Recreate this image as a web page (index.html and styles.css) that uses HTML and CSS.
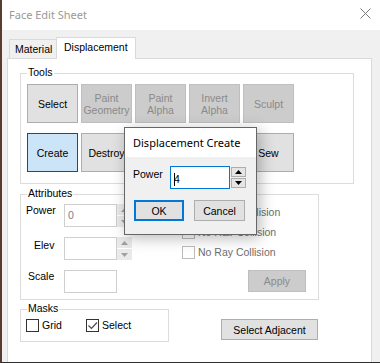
FILE: index.html
```html
<!DOCTYPE html>
<html lang="en">
<head>
    <meta charset="UTF-8">
    <meta name="viewport" content="width=device-width, initial-scale=1.0">
    <title>Face Edit Sheet</title>
    <link rel="stylesheet" href="styles.css">
</head>
<body>
    <div class="window">
        <!-- Title bar -->
        <div class="titlebar">
            <span class="title">Face Edit Sheet</span>
            <svg class="close" width="11" height="11" viewBox="0 0 11 11">
                <path d="M0.5 0.5 L10.5 10.5 M10.5 0.5 L0.5 10.5" stroke="#7a7a7a" stroke-width="1" fill="none"/>
            </svg>
        </div>

        <div class="client">
            <div class="tabs">
                <div class="tab">Material</div>
                <div class="tab active">Displacement</div>
            </div>

            <div class="tab-panel">
                <!-- Tools -->
                <div class="group tools">
                    <span class="group-title">Tools</span>
                    <div class="tool-row">
                        <button class="btn tool">Select</button>
                        <button class="btn tool" disabled>Paint<br>Geometry</button>
                        <button class="btn tool" disabled>Paint<br>Alpha</button>
                        <button class="btn tool" disabled>Invert<br>Alpha</button>
                        <button class="btn tool" disabled>Sculpt</button>
                    </div>
                    <div class="tool-row">
                        <button class="btn tool default">Create</button>
                        <button class="btn tool">Destroy</button>
                        <!-- these two sit under the dialog -->
                        <button class="btn tool"></button>
                        <button class="btn tool"></button>
                        <button class="btn tool">Sew</button>
                    </div>
                </div>

                <!-- Attributes -->
                <div class="group attributes">
                    <span class="group-title">Attributes</span>
                    <div class="attr-fields">
                        <div class="field">
                            <span class="field-label power">Power</span>
                            <div class="textbox disabled">0</div>
                            <div class="spinner">
                                <span class="spin"><svg width="7" height="4" viewBox="0 0 7 4"><polygon points="0,4 3.5,0 7,4" fill="#a0a0a0"/></svg></span>
                                <span class="spin"><svg width="7" height="4" viewBox="0 0 7 4"><polygon points="0,0 3.5,4 7,0" fill="#a0a0a0"/></svg></span>
                            </div>
                        </div>
                        <div class="field">
                            <span class="field-label elev">Elev</span>
                            <div class="textbox"></div>
                            <div class="spinner">
                                <span class="spin"><svg width="7" height="4" viewBox="0 0 7 4"><polygon points="0,4 3.5,0 7,4" fill="#a0a0a0"/></svg></span>
                                <span class="spin"><svg width="7" height="4" viewBox="0 0 7 4"><polygon points="0,0 3.5,4 7,0" fill="#a0a0a0"/></svg></span>
                            </div>
                        </div>
                        <div class="field">
                            <span class="field-label scale">Scale</span>
                            <div class="textbox"></div>
                        </div>
                    </div>
                    <div class="attr-options">
                        <label class="check disabled"><span class="box"></span>No Face Collision</label>
                        <label class="check disabled"><span class="box"></span>No Hair Collision</label>
                        <label class="check disabled"><span class="box"></span>No Ray Collision</label>
                        <button class="btn apply" disabled>Apply</button>
                    </div>
                </div>

                <div class="bottom-row">
                    <!-- Masks -->
                    <div class="group masks">
                        <span class="group-title">Masks</span>
                        <label class="check grid"><span class="box"></span>Grid</label>
                        <label class="check"><span class="box checked">
                            <svg width="11" height="11" viewBox="0 0 11 11"><polyline points="1.5,5.5 4.5,8.5 10,2.5" stroke="#4a4a4a" stroke-width="1.2" fill="none"/></svg>
                        </span>Select</label>
                    </div>
                    <button class="btn adjacent">Select Adjacent</button>
                </div>
            </div>
        </div>

        <!-- Modal dialog on top -->
        <div class="dialog">
            <div class="dialog-title">Displacement Create</div>
            <div class="dialog-body">
                <div class="dialog-field">
                    <span class="dialog-label">Power</span>
                    <div class="textbox focused"><span class="caret"></span>4</div>
                    <div class="dialog-spinner">
                        <span class="dspin"><svg width="7" height="4" viewBox="0 0 7 4"><polygon points="0,4 3.5,0 7,4" fill="#000"/></svg></span>
                        <span class="dspin"><svg width="7" height="4" viewBox="0 0 7 4"><polygon points="0,0 3.5,4 7,0" fill="#000"/></svg></span>
                    </div>
                </div>
                <div class="dialog-buttons">
                    <button class="btn ok">OK</button>
                    <button class="btn cancel">Cancel</button>
                </div>
            </div>
        </div>
    </div>
</body>
</html>
```

FILE: styles.css
```css
body {
    margin: 0;
    padding: 0;
    background-color: #f0f0f0;
    font-family: 'Liberation Sans', Arial, sans-serif;
    font-size: 10.5px;
    color: #000;
}

.window {
    position: relative;
    width: 380px;
    height: 363px;
    box-sizing: border-box;
    border-left: 2px solid #5a3b32;
    border-bottom: 1px solid #2e2e2e;
    display: flex;
    flex-direction: column;
    overflow: hidden;
}

/* Title bar */
.titlebar {
    height: 29px;
    flex-shrink: 0;
    background: #fff;
    display: flex;
    align-items: center;
    justify-content: space-between;
    padding: 0 9px 1px 7px;
}

.title {
    font-family: 'Noto Sans', sans-serif;
    font-size: 11px;
    color: #999;
}

.close {
    display: block;
    margin-bottom: 3px;
}

.client {
    flex: 1;
    display: flex;
    flex-direction: column;
    padding: 7px 8px 0 5px;
}

/* Tabs */
.tabs {
    display: flex;
    align-items: flex-end;
    height: 21px;
    padding-left: 2px;
}

.tab {
    box-sizing: border-box;
    height: 19px;
    width: 48px;
    padding: 3px 0 0 5px;
    border: 1px solid #d9d9d9;
    border-bottom: none;
    background: #f0f0f0;
    line-height: 13px;
}

.tab.active {
    position: relative;
    z-index: 1;
    height: 22px;
    width: 80px;
    margin-left: -1px;
    margin-bottom: -1px;
    padding: 3px 0 0 7px;
    background: #fff;
}

.tab-panel {
    flex: 1;
    background: #fff;
    border: 1px solid #d9d9d9;
    border-bottom: none;
    padding: 14px 0 0 12px;
}

/* Group boxes */
.group {
    position: relative;
    box-sizing: border-box;
    border: 1px solid #dcdcdc;
}

.group-title {
    position: absolute;
    top: -8px;
    left: 6px;
    padding: 0 1px;
    background: #fff;
    line-height: 13px;
}

.tools {
    width: 334px;
    padding: 10px 0 11px 6px;
}

.tool-row {
    display: flex;
    gap: 3px;
}

.tool-row + .tool-row {
    margin-top: 10px;
}

/* Buttons */
.btn {
    box-sizing: border-box;
    font-family: 'Liberation Sans', Arial, sans-serif;
    font-size: 10.5px;
    line-height: 12px;
    color: #000;
    background: #e1e1e1;
    border: 1px solid #adadad;
    padding: 0;
    margin: 0;
}

.btn:disabled {
    background: #cccccc;
    border-color: #bfbfbf;
    color: #8a8a8a;
}

.btn.default {
    background: #cce4f7;
    border-color: #005499;
}

.tool {
    width: 51px;
    height: 39px;
}

/* Attributes */
.attributes {
    width: 299px;
    margin-top: 10px;
    padding: 9px 0 6px 0;
    display: flex;
}

.attr-fields {
    display: flex;
    flex-direction: column;
    gap: 10px;
}

.field {
    display: flex;
    align-items: flex-start;
}

.field-label {
    box-sizing: border-box;
    width: 43px;
    line-height: 13px;
}

.field-label.power {
    padding-left: 5px;
}

.field-label.elev {
    padding: 2px 0 0 13px;
}

.field-label.scale {
    padding: 0 0 0 7px;
}

.textbox {
    box-sizing: border-box;
    width: 53px;
    height: 23px;
    border: 1px solid #cfcfcf;
    background: #fff;
    padding: 4px 0 0 3px;
    line-height: 13px;
}

.textbox.disabled {
    color: #7a8090;
}

.spinner {
    display: flex;
    flex-direction: column;
    width: 15px;
    height: 23px;
    gap: 1px;
}

.spin {
    flex: 1;
    display: flex;
    align-items: center;
    justify-content: center;
    background: #eaeaea;
}

.attr-options {
    display: flex;
    flex-direction: column;
    align-items: flex-start;
    margin: -2px 0 0 50px;
}

.check {
    display: flex;
    align-items: center;
    gap: 3px;
    height: 20px;
    line-height: 13px;
}

.check.disabled {
    color: #6d6d6d;
}

.box {
    box-sizing: border-box;
    width: 13px;
    height: 13px;
    border: 1px solid #333;
    background: #fff;
    display: flex;
    align-items: center;
    justify-content: center;
}

.check.disabled .box {
    border-color: #bcbcbc;
}

.apply {
    width: 58px;
    height: 22px;
    margin: 8px 0 0 66px;
}

/* Masks + adjacent */
.bottom-row {
    display: flex;
    align-items: flex-start;
    margin-top: 9px;
}

.masks {
    width: 149px;
    height: 33px;
    padding: 9px 0 0 5px;
    display: flex;
    align-items: flex-start;
}

.masks .check {
    height: 13px;
}

.masks .check.grid {
    width: 60px;
}

.adjacent {
    width: 97px;
    height: 21px;
    margin: 10px 0 0 52px;
}

/* Dialog */
.dialog {
    position: absolute;
    left: 122px;
    top: 127px;
    width: 133px;
    height: 108px;
    box-sizing: border-box;
    border: 1px solid #666;
    background: #f0f0f0;
    box-shadow: 3px 3px 14px rgba(0, 0, 0, 0.28);
    display: flex;
    flex-direction: column;
}

.dialog-title {
    height: 29px;
    background: #fff;
    padding-left: 8px;
    font-family: 'Noto Sans', sans-serif;
    font-size: 11px;
    line-height: 30px;
}

.dialog-body {
    padding: 9px 0 0 8px;
}

.dialog-field {
    display: flex;
    align-items: flex-start;
}

.dialog-label {
    width: 37px;
    padding-top: 2px;
    line-height: 13px;
}

.textbox.focused {
    width: 60px;
    border-color: #0078d7;
    padding: 4px 0 0 3px;
    display: flex;
    align-items: center;
    height: 23px;
}

.caret {
    display: inline-block;
    width: 0;
    height: 13px;
    border-left: 1px solid #000;
    margin-right: -1px;
}

.dialog-spinner {
    display: flex;
    flex-direction: column;
    gap: 1px;
    margin: 1px 0 0 1px;
}

.dspin {
    box-sizing: border-box;
    width: 15px;
    height: 10px;
    border: 1px solid #adadad;
    background: #e5e5e5;
    display: flex;
    align-items: center;
    justify-content: center;
}

.dialog-buttons {
    display: flex;
    gap: 10px;
    margin: 11px 0 0 1px;
}

.ok {
    width: 50px;
    height: 21px;
    border: 2px solid #0078d7;
}

.cancel {
    width: 51px;
    height: 21px;
}
```
